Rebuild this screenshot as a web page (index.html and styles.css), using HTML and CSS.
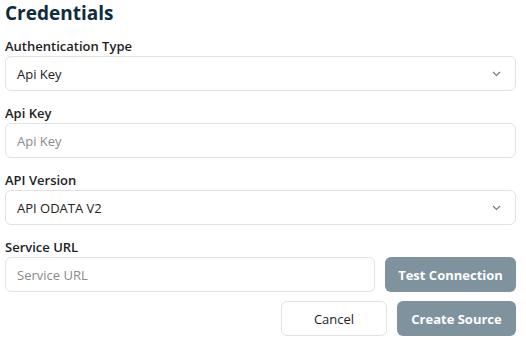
FILE: index.html
```html
<!DOCTYPE html>
<html lang="en">
<head>
    <meta charset="UTF-8">
    <title>Credentials</title>
    <link rel="stylesheet" href="styles.css">
</head>
<body>
    <div class="form">
        <h2 class="title">Credentials</h2>

        <div class="field">
            <label>Authentication Type</label>
            <div class="select">
                <span>Api Key</span>
                <svg class="chevron" width="9" height="6" viewBox="0 0 9 6"><path d="M1 1l3.5 3.5L8 1" fill="none" stroke="#777" stroke-width="1.1"/></svg>
            </div>
        </div>

        <div class="field">
            <label>Api Key</label>
            <input class="input" placeholder="Api Key">
        </div>

        <div class="field">
            <label>API Version</label>
            <div class="select">
                <span>API ODATA V2</span>
                <svg class="chevron" width="9" height="6" viewBox="0 0 9 6"><path d="M1 1l3.5 3.5L8 1" fill="none" stroke="#777" stroke-width="1.1"/></svg>
            </div>
        </div>

        <div class="field">
            <label>Service URL</label>
            <div class="row">
                <input class="input" placeholder="Service URL">
                <button class="btn primary test">Test Connection</button>
            </div>
        </div>

        <div class="actions">
            <button class="btn cancel">Cancel</button>
            <button class="btn primary create">Create Source</button>
        </div>
    </div>
</body>
</html>
```

FILE: styles.css
```css
* {
    box-sizing: border-box;
}

body {
    margin: 0;
    padding: 0 10px 0 5px;
    background: #fff;
    font-family: 'Open Sans', Arial, sans-serif;
    color: #1d1d1f;
}

.title {
    margin: 0 0 10px;
    font-size: 19px;
    line-height: 26px;
    font-weight: 700;
    color: #0f2b3e;
}

.field {
    margin-bottom: 12px;
}

.field label {
    display: block;
    font-size: 13px;
    line-height: 20px;
    font-weight: 600;
    color: #1d1d1f;
}

.select,
.input {
    height: 35px;
    width: 100%;
    border: 1px solid #e2e2e2;
    border-radius: 6px;
    background: #fff;
    padding: 0 11px;
    font-family: inherit;
    font-size: 13px;
    color: #222;
}

.select {
    display: flex;
    align-items: center;
    justify-content: space-between;
    padding-right: 14px;
}

.input::placeholder {
    color: #8a8a8a;
}

.row {
    display: flex;
    gap: 10px;
}

.row .input {
    flex: 1;
}

.btn {
    height: 35px;
    border-radius: 6px;
    font-family: inherit;
    font-size: 13px;
    font-weight: 700;
    border: none;
}

.primary {
    background: #7f939e;
    color: #fff;
}

.test {
    width: 131px;
}

.actions {
    display: flex;
    justify-content: flex-end;
    gap: 10px;
    margin-top: -3px;
}

.cancel {
    width: 106px;
    background: #fff;
    border: 1px solid #e2e2e2;
    color: #1d1d1f;
    font-weight: 500;
}

.create {
    width: 119px;
}
```
